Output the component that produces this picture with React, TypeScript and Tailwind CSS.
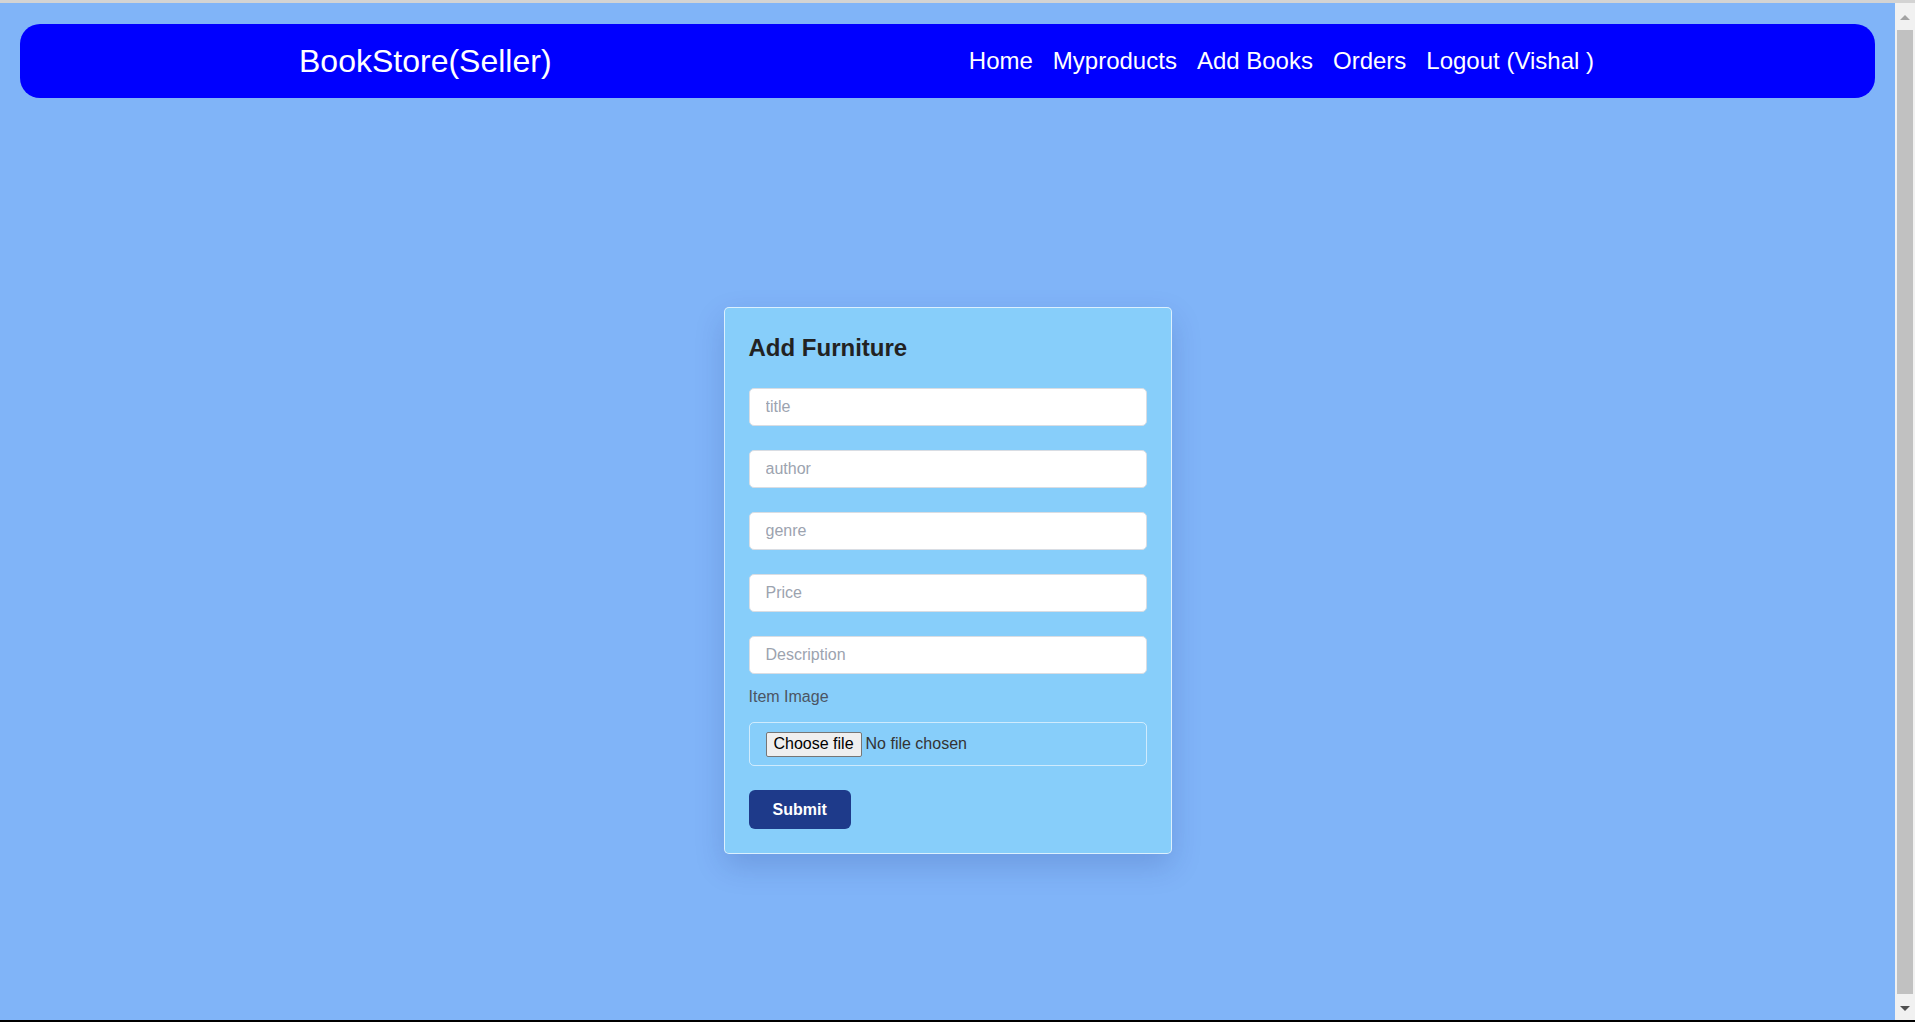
import React from 'react';

const FIELDS = ['title', 'author', 'genre', 'Price', 'Description'];
const LINKS = ['Home', 'Myproducts', 'Add Books', 'Orders', 'Logout (Vishal )'];

function Navbar() {
    return (
        <nav className="mt-[21px] mx-5 h-[74px] shrink-0 rounded-[20px] bg-[#0000ff] flex items-center pl-[279px] pr-[281px] text-white">
            <span className="text-[32px] leading-none">BookStore(Seller)</span>
            <ul className="ml-auto flex items-center gap-5 text-2xl leading-none">
                {LINKS.map((link) => (
                    <li key={link} className="cursor-pointer">{link}</li>
                ))}
            </ul>
        </nav>
    );
}

function AddItemForm() {
    return (
        <form className="w-[448px] mx-auto mt-[209px] bg-[#87cefa] border border-white/70 rounded-[5px] p-6 shadow-[0_12px_30px_rgba(20,40,120,0.18)]">
            <h2 className="text-2xl leading-8 font-bold text-[#222222] mb-6">Add Furniture</h2>

            <div className="flex flex-col gap-6">
                {FIELDS.map((f) => (
                    <input
                        key={f}
                        type="text"
                        placeholder={f}
                        className="block w-full h-[38px] px-4 bg-white border border-[#d9dde3] rounded-[5px] text-base text-[#222] placeholder:text-[#9ca3af] outline-none"
                    />
                ))}
            </div>

            <label className="block mt-[11px] text-base leading-6 text-[#4b5563]">Item Image</label>

            <div className="mt-[13px] h-[44px] px-4 border border-white/60 rounded-[5px] flex items-center text-base">
                <span className="h-[25px] px-[7px] flex items-center bg-[#efefef] border border-[#767676] rounded-[2px] text-black leading-none">
                    Choose file
                </span>
                <span className="ml-1 text-[#333333] leading-none">No file chosen</span>
            </div>

            <button
                type="button"
                className="mt-6 h-[39px] px-6 rounded-md bg-[#1e3a8a] text-white font-bold text-base"
            >
                Submit
            </button>
        </form>
    );
}

function FakeScrollbar() {
    return (
        <div className="w-[20px] shrink-0 bg-[#f1f1f1] flex flex-col items-center pt-[12px] pb-[9px]">
            <div className="w-0 h-0 border-l-[5px] border-r-[5px] border-b-[5px] border-l-transparent border-r-transparent border-b-[#a3a3a3]" />
            <div className="mt-[10px] mb-[12px] flex-1 w-[16px] bg-[#c1c1c1]" />
            <div className="w-0 h-0 border-l-[5px] border-r-[5px] border-t-[5px] border-l-transparent border-r-transparent border-t-[#505050]" />
        </div>
    );
}

export default function App() {
    return (
        <div className="h-screen flex flex-col overflow-hidden font-['Liberation_Sans',Arial,sans-serif]">
            <div className="h-[3px] shrink-0 bg-[#d3d3d3]" />
            <div className="flex flex-1 min-h-0">
                <main className="flex-1 min-w-0 bg-[#80b4f8] flex flex-col overflow-hidden">
                    <Navbar />
                    <AddItemForm />
                </main>
                <FakeScrollbar />
            </div>
            <div className="h-[2px] shrink-0 bg-black" />
        </div>
    );
}
